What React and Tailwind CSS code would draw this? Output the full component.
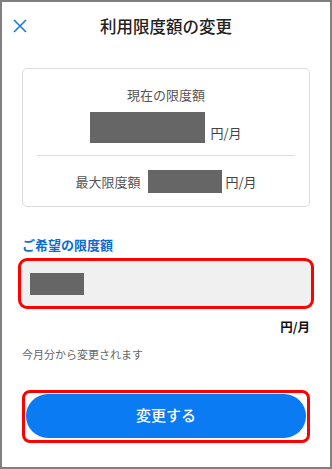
import React from 'react';

const font = { fontFamily: '"Noto Sans CJK JP", "Noto Sans", sans-serif' };

const Redacted = ({ className }) => <div className={`bg-[#666666] ${className}`} />;

const App = () => {
  return (
    <div
      className="w-[332px] h-[469px] border-2 border-[#808080] bg-white flex flex-col text-[#333]"
      style={font}
    >
      {/* ヘッダー */}
      <div className="flex items-center h-[48px] px-[11px]">
        <svg width="14" height="14" viewBox="0 0 14 14" className="shrink-0">
          <path d="M1 1 L13 13 M13 1 L1 13" stroke="#1a7be6" strokeWidth="1.6" fill="none" />
        </svg>
        <h1 className="flex-1 text-center text-[16.5px] font-medium text-[#222] leading-none pr-[14px]">
          利用限度額の変更
        </h1>
      </div>

      {/* 現在の限度額 */}
      <div className="mx-[20px] mt-[18px] border border-[#dcdcdc] rounded-[5px] px-[14px] pt-[19px] pb-[13px]">
        <p className="text-center text-[13px] text-[#555] leading-none">現在の限度額</p>
        <div className="flex items-end justify-center mt-[11px]">
          <Redacted className="w-[115px] h-[31px]" />
          <span className="ml-[5px] text-[13px] text-[#444] leading-none mb-[4px]">円/月</span>
        </div>
        <div className="border-t border-[#dcdcdc] mt-[12px]" />
        <div className="flex items-center justify-center mt-[14px]">
          <span className="text-[13px] text-[#555] leading-none">最大限度額</span>
          <Redacted className="ml-[8px] w-[74px] h-[23px]" />
          <span className="ml-[3px] text-[13px] text-[#444] leading-none">円/月</span>
        </div>
      </div>

      {/* ご希望の限度額 */}
      <div className="px-[16px] mt-[31px]">
        <p className="px-[4px] text-[13px] font-bold text-[#0b6bd3] leading-none">ご希望の限度額</p>
        <div className="mt-[7px] border-[3px] border-[#ff0000] rounded-[9px] bg-[#f0f0f0] h-[51px] flex items-center px-[9px]">
          <Redacted className="w-[54px] h-[22px]" />
        </div>
        <p className="text-right pr-[4px] mt-[12px] text-[12.5px] font-bold text-[#111] leading-none">円/月</p>
        <p className="px-[4px] mt-[15px] text-[11px] text-[#666] leading-none">今月分から変更されます</p>
      </div>

      {/* 変更ボタン */}
      <div className="px-[20px] mt-[30px]">
        <div className="border-[3px] border-[#ff0000] rounded-[8px] pt-[1px] pb-[2px] px-[1px]">
          <button className="w-full h-[44px] rounded-full bg-[#0a7bf2] text-white text-[15px] font-medium">
            変更する
          </button>
        </div>
      </div>
    </div>
  );
};

export default App;
